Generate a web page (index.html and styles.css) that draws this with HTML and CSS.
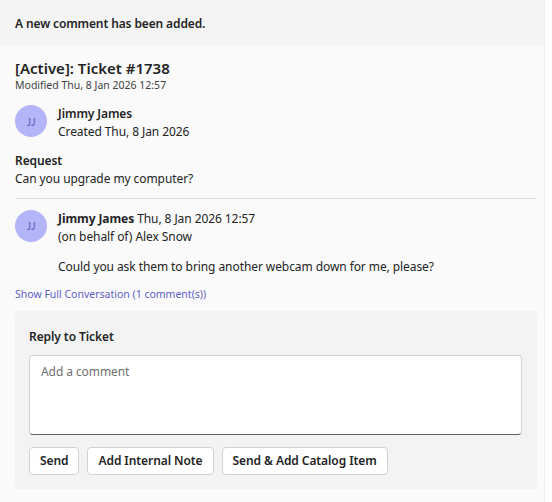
FILE: index.html
```html
<!DOCTYPE html>
<html>
<head>
<meta charset="utf-8">
<link rel="stylesheet" href="styles.css">
</head>
<body>
<div class="card">
  <div class="header">A new comment has been added.</div>
  <div class="content">
    <div class="title">[Active]: Ticket #1738</div>
    <div class="modified">Modified Thu, 8 Jan 2026 12:57</div>
    <div class="person">
      <div class="avatar">JJ</div>
      <div class="pinfo">
        <div class="pname">Jimmy James</div>
        <div class="pline">Created Thu, 8 Jan 2026</div>
      </div>
    </div>
    <div class="request">
      <div class="rlabel">Request</div>
      <div class="rtext">Can you upgrade my computer?</div>
    </div>
    <div class="divider"></div>
    <div class="person comment">
      <div class="avatar">JJ</div>
      <div class="pinfo">
        <div class="pline"><span class="strong">Jimmy James</span> Thu, 8 Jan 2026 12:57</div>
        <div class="pline">(on behalf of) Alex Snow</div>
        <div class="ctext">Could you ask them to bring another webcam down for me, please?</div>
      </div>
    </div>
    <div class="link">Show Full Conversation (1 comment(s))</div>
    <div class="reply">
      <div class="rtitle">Reply to Ticket</div>
      <div class="textarea">Add a comment</div>
      <div class="buttons">
        <div class="btn">Send</div>
        <div class="btn">Add Internal Note</div>
        <div class="btn">Send &amp; Add Catalog Item</div>
      </div>
    </div>
  </div>
</div>
</body>
</html>
```
FILE: styles.css
```css
html, body {
  margin: 0;
  padding: 0;
  background: #ffffff;
}
body {
  font-family: "Noto Sans", "Open Sans", sans-serif;
  color: #242424;
  font-size: 12px;
  letter-spacing: -0.08px;
}
.card {
  width: 545px;
  height: 502px;
  background: #fafafa;
  border-right: 1px solid #ececec;
  box-sizing: border-box;
}
.header {
  height: 46px;
  background: #f4f4f4;
  padding: 0 15px;
  display: flex;
  align-items: center;
  font-weight: 600;
  font-size: 12px;
  letter-spacing: -0.12px;
}
.content {
  padding: 12px 7px 0 15px;
}
.title {
  font-size: 15px;
  font-weight: 600;
  line-height: 20px;
  letter-spacing: 0;
}
.modified {
  font-size: 10.5px;
  line-height: 14px;
  color: #424242;
  letter-spacing: 0;
}
.person {
  display: flex;
  gap: 11px;
  margin-top: 13px;
}
.avatar {
  width: 32px;
  height: 32px;
  border-radius: 50%;
  background: #b4b5f8;
  color: #5b5fc7;
  font-family: Lato, "Liberation Sans", sans-serif;
  font-size: 11px;
  letter-spacing: 0;
  display: flex;
  align-items: center;
  justify-content: center;
  flex: none;
}
.pname {
  font-weight: 600;
  line-height: 18px;
}
.pline {
  line-height: 18.5px;
}
.strong { font-weight: 700; }
.request {
  margin-top: 10px;
}
.rlabel {
  font-weight: 600;
  line-height: 18px;
}
.rtext { line-height: 18px; }
.divider {
  height: 1px;
  background: #e0e0e0;
  margin: 10px 0 0 0;
}
.comment {
  margin-top: 11px;
}
.ctext {
  margin-top: 11px;
  line-height: 18px;
}
.link {
  margin-top: 11px;
  font-size: 10.5px;
  color: #5b5fc7;
  line-height: 14px;
  letter-spacing: 0;
}
.reply {
  margin-top: 10px;
  background: #f3f3f3;
  border-radius: 4px;
  padding: 17px 15px 14px 14px;
}
.rtitle {
  font-weight: 600;
  line-height: 18px;
}
.textarea {
  margin-top: 9px;
  height: 80px;
  box-sizing: border-box;
  background: #ffffff;
  border: 1px solid #d1d1d1;
  border-bottom-color: #616161;
  border-radius: 4px;
  padding: 7px 11px;
  color: #707070;
  line-height: 18px;
}
.buttons {
  display: flex;
  gap: 8px;
  margin-top: 12px;
}
.btn {
  background: #ffffff;
  border: 1px solid #d1d1d1;
  border-radius: 4px;
  height: 28px;
  box-sizing: border-box;
  padding: 0 10px;
  display: flex;
  align-items: center;
  font-weight: 600;
}
```
